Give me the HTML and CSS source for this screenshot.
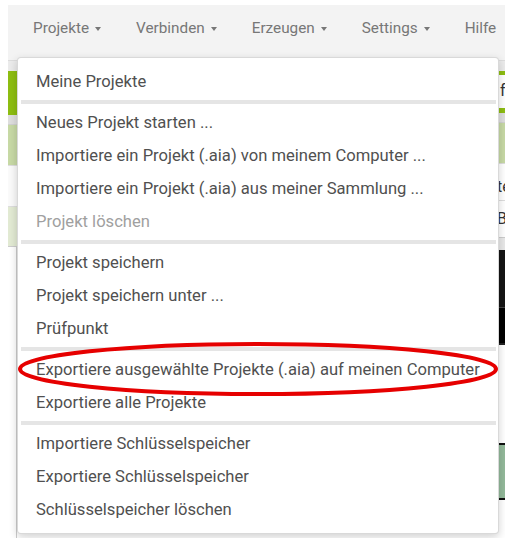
FILE: index.html
```html
<!DOCTYPE html>
<html lang="de">
<head>
    <meta charset="UTF-8">
    <meta name="viewport" content="width=device-width, initial-scale=1.0">
    <title>Projekte</title>
    <link rel="stylesheet" href="styles.css">
</head>
<body>
    <div class="screen">
        <nav class="topbar">
            <span class="nav-item">Projekte <i class="caret"></i></span>
            <span class="nav-item">Verbinden <i class="caret"></i></span>
            <span class="nav-item">Erzeugen <i class="caret"></i></span>
            <span class="nav-item">Settings <i class="caret"></i></span>
            <span class="nav-item">Hilfe</span>
        </nav>

        <div class="workspace">
            <div class="col-main">
                <div class="blk line"></div>
                <div class="blk toolbar-gray"></div>
                <div class="blk toolbar-green"></div>
                <div class="blk sub-gray"></div>
                <div class="blk sub-green"></div>
                <div class="blk plain"></div>
                <div class="blk pale-green"></div>
                <div class="blk rest"></div>
            </div>
            <div class="col-edge">
                <div class="blk line"></div>
                <div class="blk toolbar-gray"></div>
                <div class="blk edge-input">f</div>
                <div class="blk sub-gray edge-sub"></div>
                <div class="blk sub-green edge-green"></div>
                <div class="blk edge-text low">te</div>
                <div class="blk edge-text">Bo</div>
                <div class="blk edge-gray"></div>
                <div class="blk edge-dark"></div>
                <div class="blk edge-black"></div>
                <div class="blk edge-rule"></div>
                <div class="blk edge-white"></div>
                <div class="blk edge-viewer"></div>
            </div>
        </div>

        <ul class="dropdown">
            <li>Meine Projekte</li>
            <li class="divider"></li>
            <li>Neues Projekt starten ...</li>
            <li>Importiere ein Projekt (.aia) von meinem Computer ...</li>
            <li>Importiere ein Projekt (.aia) aus meiner Sammlung ...</li>
            <li class="disabled">Projekt löschen</li>
            <li class="divider"></li>
            <li>Projekt speichern</li>
            <li>Projekt speichern unter ...</li>
            <li>Prüfpunkt</li>
            <li class="divider"></li>
            <li>Exportiere ausgewählte Projekte (.aia) auf meinen Computer</li>
            <li>Exportiere alle Projekte</li>
            <li class="divider"></li>
            <li>Importiere Schlüsselspeicher</li>
            <li>Exportiere Schlüsselspeicher</li>
            <li>Schlüsselspeicher löschen</li>
        </ul>

        <svg class="highlight" width="497" height="533" viewBox="0 0 497 533">
            <ellipse cx="250" cy="364" rx="238" ry="25" fill="none" stroke="#e60000" stroke-width="4"/>
        </svg>
    </div>
</body>
</html>
```

FILE: styles.css
```css
body {
    margin: 0;
    background: #fff;
    font-family: Roboto, "Liberation Sans", sans-serif;
}

.screen {
    position: relative;
    width: 497px;
    height: 533px;
    margin: 5px 0 0 8px;
    overflow: hidden;
    background: #fff;
}

/* top menu bar */
.topbar {
    display: flex;
    height: 55px;
    padding: 13px 0 0 25px;
    box-sizing: border-box;
    background: #f3f3f3;
    gap: 35px;
}

.nav-item {
    display: flex;
    align-items: center;
    gap: 6px;
    height: 20px;
    font-size: 15.3px;
    color: #777;
    white-space: nowrap;
}

.caret {
    width: 0;
    height: 0;
    border-top: 4px solid #777;
    border-left: 3px solid transparent;
    border-right: 3px solid transparent;
    margin-top: 1px;
}

/* what shows behind the menu */
.workspace {
    display: flex;
}

.col-main {
    flex: 1;
}

.col-edge {
    width: 6px;
    overflow: hidden;
    font-size: 16px;
    color: #333;
}

.blk {
    box-sizing: border-box;
}

.line { height: 1px; background: #dcdcdc; }
.toolbar-gray { height: 10px; background: #ebebeb; }
.toolbar-green { height: 44px; background: #8dbd12; }
.sub-gray { height: 10px; background: #dedede; border-bottom: 1px solid #d0d0d0; }
.sub-green { height: 40px; background: #c7d9a5; }
.plain { height: 42px; background: #fafafa; border-top: 1px solid #ddd; border-bottom: 1px solid #ddd; }
.pale-green { height: 40px; background: #e2ead3; border-bottom: 1px solid #ccc; }
.rest { height: 300px; background: #fff; border-left: 1px solid #ccc; margin-left: 8px; }

.edge-input {
    height: 42px;
    background: #fff;
    border-top: 4px solid #8dbd12;
    border-bottom: 5px solid #8dbd12;
    line-height: 32px;
    padding-left: 1px;
}

.edge-sub { height: 10px; }
.edge-green { height: 40px; }

.edge-text {
    height: 37px;
    line-height: 36px;
    border-top: 1px solid #ddd;
    margin-left: -2px;
}

.edge-text.low {
    line-height: 46px;
}

.edge-gray { height: 13px; background: #e8e8e8; border-top: 1px solid #ccc; }
.edge-dark { height: 57px; background: #151515; }
.edge-black { height: 36px; background: #000; border-top: 1px solid #444; }
.edge-rule { height: 7px; background: #fff; border-top: 2px solid #222; }
.edge-white { height: 93px; background: #fff; }
.edge-viewer { height: 57px; background: #93b99a; border-top: 2px solid #111; border-bottom: 2px solid #111; }

/* the open dropdown */
.dropdown {
    position: absolute;
    top: 52px;
    left: 9px;
    width: 482px;
    box-sizing: border-box;
    margin: 0;
    padding: 7px 0;
    list-style: none;
    background: #fff;
    border: 1px solid rgba(0, 0, 0, 0.15);
    border-radius: 4px;
    box-shadow: 0 3px 8px rgba(0, 0, 0, 0.18);
}

.dropdown li {
    height: 33px;
    line-height: 33px;
    padding: 0 18px;
    font-size: 16.6px;
    color: #505050;
    white-space: nowrap;
}

.dropdown li.disabled {
    color: #a0a0a0;
}

.dropdown li.divider {
    height: 4px;
    padding: 0;
    margin: 2px 2px 2px 3px;
    background: #e5e5e5;
}

.highlight {
    position: absolute;
    top: 0;
    left: 0;
    pointer-events: none;
}
```
